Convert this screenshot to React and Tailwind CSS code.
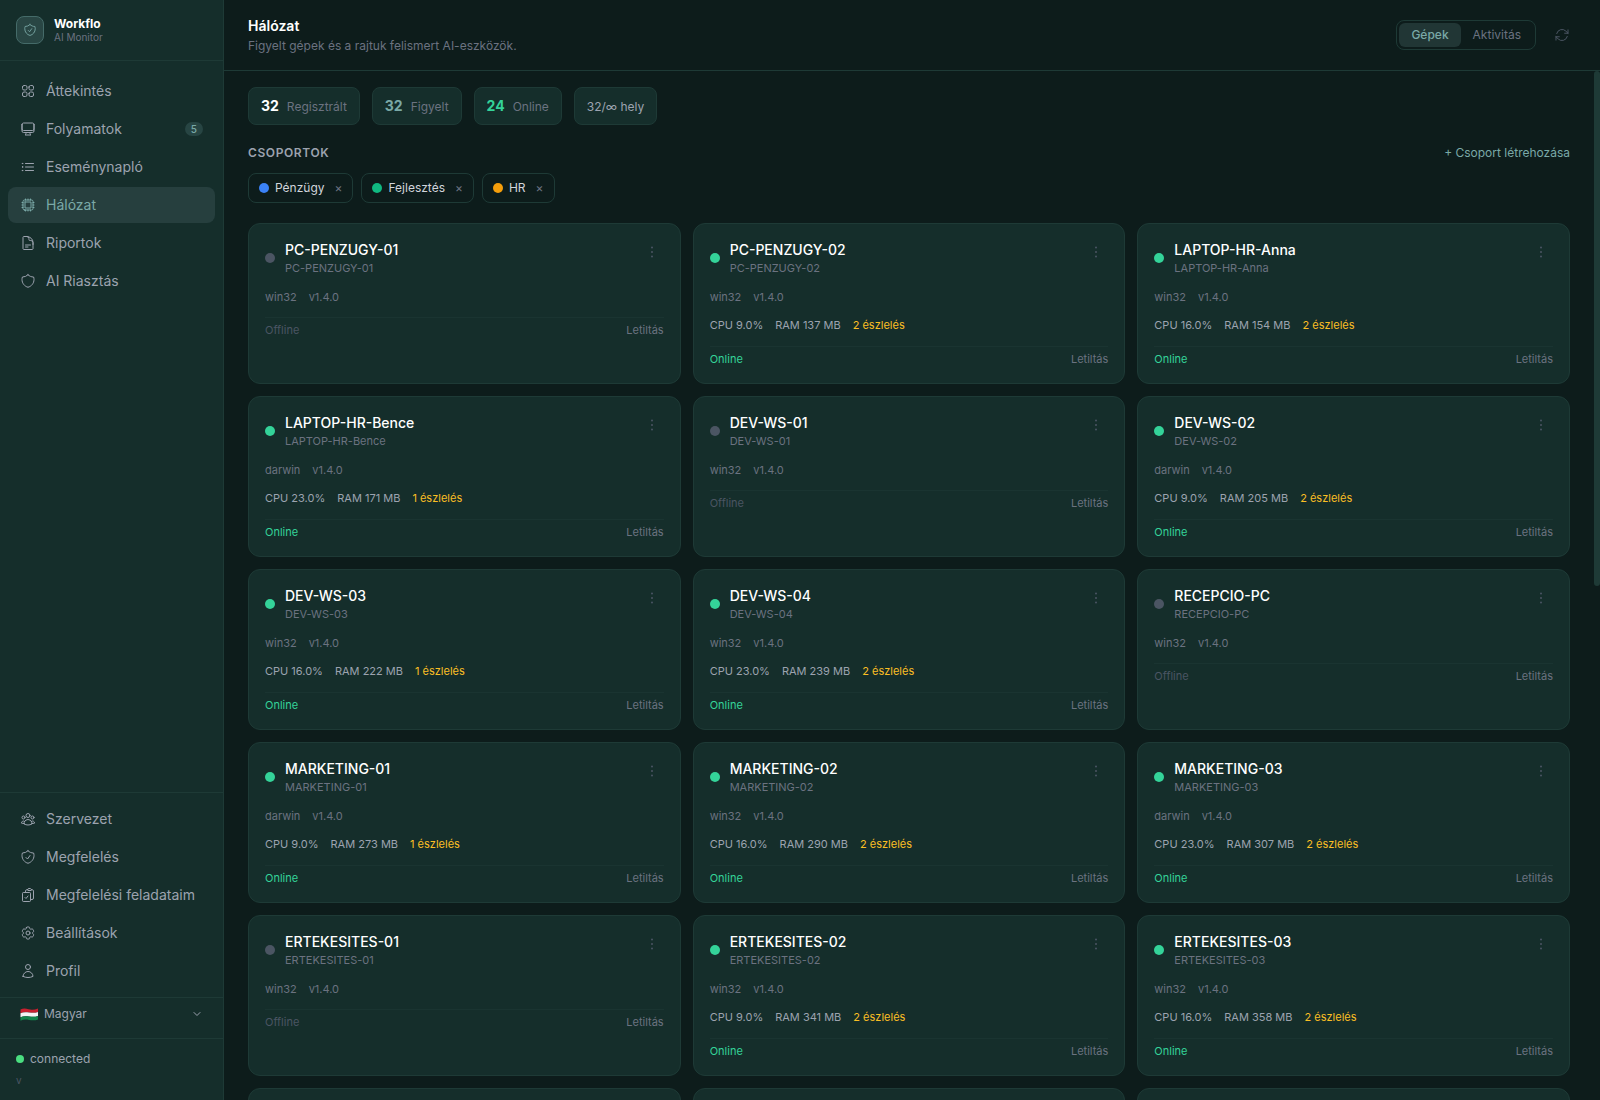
import React, { useState } from "react"
import {
    HiOutlineArrowPath,
    HiOutlineClipboardDocumentCheck,
    HiOutlineCog6Tooth,
    HiOutlineComputerDesktop,
    HiOutlineCpuChip,
    HiOutlineDocumentText,
    HiOutlineListBullet,
    HiOutlineShieldCheck,
    HiOutlineSquares2X2,
    HiOutlineUser,
    HiOutlineUserGroup,
} from "react-icons/hi2"
import { ChevronDown } from "lucide-react"

const ShieldIcon = ({ className }) => (
    <svg viewBox="0 0 24 24" fill="none" stroke="currentColor" strokeWidth="1.5" strokeLinecap="round" strokeLinejoin="round" className={className} aria-hidden="true">
        <path d="M12 2.714A11.959 11.959 0 0 1 3.598 6 11.99 11.99 0 0 0 3 9.749c0 5.592 3.824 10.29 9 11.623 5.176-1.332 9-6.03 9-11.622 0-1.31-.21-2.571-.598-3.751h-.152c-3.196 0-6.1-1.248-8.25-3.285Z" />
    </svg>
)

const FlagHu = () => (
    <svg viewBox="0 0 18 13" className="w-[18px] h-[13px] shrink-0" aria-hidden="true">
        <path d="M.5 1.6C3 .2 5.500 .4 8.500 1.200S15 1.700 18 .4V4C15 5.200 12 4.900 9 4.500S3 4 .5 5.200Z" fill="#c8202f" />
        <path d="M.5 5.200C3 4 6 4.100 9 4.500S15 5.200 18 4V8C15 9.200 12 8.900 9 8.500S3 8 .5 9.200Z" fill="#f3f3f3" />
        <path d="M.5 9.200C3 8 6 8.100 9 8.500S15 9.200 18 8V11.400C15 12.700 12 12.400 9 11.900S3 11.400 .5 12.700Z" fill="#12834a" />
    </svg>
)

const mainNav = [
    { label: "Áttekintés", icon: HiOutlineSquares2X2 },
    { label: "Folyamatok", icon: HiOutlineComputerDesktop, badge: 5 },
    { label: "Eseménynapló", icon: HiOutlineListBullet },
    { label: "Hálózat", icon: HiOutlineCpuChip, active: true },
    { label: "Riportok", icon: HiOutlineDocumentText },
    { label: "AI Riasztás", icon: ShieldIcon },
]

const bottomNav = [
    { label: "Szervezet", icon: HiOutlineUserGroup },
    { label: "Megfelelés", icon: HiOutlineShieldCheck },
    { label: "Megfelelési feladataim", icon: HiOutlineClipboardDocumentCheck },
    { label: "Beállítások", icon: HiOutlineCog6Tooth },
    { label: "Profil", icon: HiOutlineUser },
]

const groups = [
    { name: "Pénzügy", dot: "bg-[#3b82f6]" },
    { name: "Fejlesztés", dot: "bg-[#10b981]" },
    { name: "HR", dot: "bg-[#f59e0b]" },
]

const names = [
    "PC-PENZUGY-01", "PC-PENZUGY-02", "LAPTOP-HR-Anna", "LAPTOP-HR-Bence",
    "DEV-WS-01", "DEV-WS-02", "DEV-WS-03", "DEV-WS-04", "RECEPCIO-PC",
    "MARKETING-01", "MARKETING-02", "MARKETING-03",
    "ERTEKESITES-01", "ERTEKESITES-02", "ERTEKESITES-03",
]

const macs = ["LAPTOP-HR-Bence", "DEV-WS-02", "MARKETING-01", "MARKETING-03"]

const machines = names.map((name, i) => ({
    name,
    platform: macs.includes(name) ? "darwin" : "win32",
    version: "v1.4.0",
    online: i % 4 !== 0,
    cpu: (2 + (i % 4) * 7).toFixed(1),
    ram: 120 + i * 17,
    detections: i % 3 === 0 ? 1 : 2,
}))

const NavItem = ({ label, icon: Icon, badge, active }) => (
    <a
        href="#"
        aria-current={active ? "page" : undefined}
        className={`flex items-center gap-2.5 rounded-lg px-3 py-2 text-sm ${active ? "bg-[#263f3e] text-[#7aa9a7]" : "text-[#9ca3af]"}`}
    >
        <Icon className="size-4 shrink-0" />
        <span className="flex-1">{label}</span>
        {badge && (
            <span className="rounded-full bg-[#274543] px-1.5 text-[10px] leading-[14px] font-medium text-[#7aa9a7]">{badge}</span>
        )}
    </a>
)

const Sidebar = () => (
    <aside className="flex w-56 shrink-0 flex-col border-r border-[#1e3a36] bg-[#152e2b]">
        <div className="flex items-center gap-2.5 border-b border-[#1e3a36] p-4">
            <div className="flex size-7 items-center justify-center rounded-lg border border-[#456b69] bg-[#294644] text-[#7aa9a7]">
                <HiOutlineShieldCheck className="size-3.5" />
            </div>
            <div>
                <p className="text-xs leading-tight font-bold text-white">Workflo</p>
                <p className="text-[10px] leading-tight text-[#6b7280]">AI Monitor</p>
            </div>
        </div>

        <nav className="flex flex-1 flex-col gap-0.5 px-2 py-3">
            {mainNav.map((item) => <NavItem key={item.label} {...item} />)}
        </nav>

        <nav className="flex flex-col gap-0.5 border-t border-[#1e3a36] p-2">
            {bottomNav.map((item) => <NavItem key={item.label} {...item} />)}
        </nav>

        <div className="border-t border-[#1e3a36] px-2 pb-2">
            <div className="flex items-center gap-1.5 px-3 py-2 text-xs text-[#9ca3af]">
                <FlagHu />
                <select aria-label="Nyelv" className="flex-1 appearance-none bg-transparent outline-none">
                    <option>Magyar</option>
                </select>
                <ChevronDown className="size-3" />
            </div>
        </div>

        <div className="border-t border-[#1e3a36] px-4 py-3">
            <div className="flex items-center gap-1.5 text-xs text-[#9ca3af]">
                <span className="size-2 rounded-full bg-[#4ade80]"></span>
                connected
            </div>
            <p className="mt-1.5 text-[10px] text-[#4b5563]">v</p>
        </div>
    </aside>
)

const Stat = ({ value, label, color }) => (
    <div className="rounded-lg border border-[#1e3a36] bg-[#152e2b] px-3 py-2 text-sm">
        <span className={`font-bold ${color}`}>{value}</span>
        <span className="ml-2 text-xs text-[#6b7280]">{label}</span>
    </div>
)

const MachineCard = ({ machine }) => (
    <article className="rounded-xl border border-[#1e3a36] bg-[#152e2b] p-4">
        <div className="flex items-start justify-between">
            <div className="flex items-center gap-2.5">
                <span className={`size-2.5 rounded-full ${machine.online ? "bg-[#34d399]" : "bg-[#4b5563]"}`}></span>
                <div>
                    <h3 className="text-sm font-medium text-white">{machine.name}</h3>
                    <p className="text-[11px] text-[#6b7280]">{machine.name}</p>
                </div>
            </div>
            <button type="button" aria-label="Műveletek" className="p-1 text-[#4b5563]">
                <svg viewBox="0 0 16 16" fill="currentColor" className="size-4">
                    <circle cx="8" cy="3.5" r="1" />
                    <circle cx="8" cy="8" r="1" />
                    <circle cx="8" cy="12.500" r="1" />
                </svg>
            </button>
        </div>

        <div className="mt-3 flex gap-3 text-[11px] text-[#6b7280]">
            <span>{machine.platform}</span>
            <span>{machine.version}</span>
        </div>

        {machine.online && (
            <div className="mt-3 flex gap-3 text-[11px] text-[#9ca3af]">
                <span>CPU {machine.cpu}%</span>
                <span>RAM {machine.ram} MB</span>
                <span className="text-[#fbbf24]">{machine.detections} észlelés</span>
            </div>
        )}

        <div className="mt-3 flex justify-between border-t border-[#1a3431] pt-1 text-[11px]">
            <span className={machine.online ? "text-[#34d399]" : "text-[#4b5563]"}>{machine.online ? "Online" : "Offline"}</span>
            <button type="button" className="text-[#6b7280]">Letiltás</button>
        </div>
    </article>
)

const App = () => {
    const [tab, setTab] = useState("Gépek")

    return (
        <div className="flex h-screen bg-[#0d1c1b] font-['Inter',sans-serif]">
            <Sidebar />

            <main className="flex min-w-0 flex-1 flex-col">
                <header className="flex items-center justify-between border-b border-[#1e3a36] px-6 py-4">
                    <div>
                        <h1 className="text-sm font-semibold text-white">Hálózat</h1>
                        <p className="mt-0.5 text-xs text-[#6b7280]">Figyelt gépek és a rajtuk felismert AI-eszközök.</p>
                    </div>
                    <div className="flex items-center gap-3">
                        <div className="flex rounded-lg border border-[#1e3a36] p-0.5">
                            {["Gépek", "Aktivitás"].map((name) => (
                                <button
                                    key={name}
                                    type="button"
                                    onClick={() => setTab(name)}
                                    className={`rounded-md px-3 py-1 text-xs ${tab === name ? "bg-[#213635] font-medium text-[#7aa9a7]" : "text-[#6b7280]"}`}
                                >
                                    {name}
                                </button>
                            ))}
                        </div>
                        <button type="button" aria-label="Frissítés" className="p-1.5 text-[#4b5563]">
                            <HiOutlineArrowPath className="size-4" />
                        </button>
                    </div>
                </header>

                <div className="flex min-h-0 flex-1">
                    <div className="flex min-w-0 flex-1 flex-col gap-5 overflow-hidden px-6 pt-4">
                        <section className="flex gap-3">
                            <Stat value="32" label="Regisztrált" color="text-white" />
                            <Stat value="32" label="Figyelt" color="text-[#7aa9a7]" />
                            <Stat value="24" label="Online" color="text-[#34d399]" />
                            <div className="rounded-lg border border-[#1e3a36] bg-[#152e2b] px-3 py-2 text-sm">
                                <span className="text-xs text-[#9ca3af]">32/∞ hely</span>
                            </div>
                        </section>

                        <section>
                            <div className="flex items-center justify-between text-xs">
                                <h2 className="font-semibold tracking-wider text-[#9ca3af] uppercase">Csoportok</h2>
                                <button type="button" className="text-[#7aa9a7]">+ Csoport létrehozása</button>
                            </div>
                            <ul className="mt-3 flex gap-2">
                                {groups.map((group) => (
                                    <li key={group.name} className="flex items-center gap-1.5 rounded-lg border border-[#1e3a36] px-2.5 py-1.5 text-xs text-[#d1d5db]">
                                        <span className={`size-2.5 rounded-full ${group.dot}`}></span>
                                        {group.name}
                                        <button type="button" aria-label={`${group.name} törlése`} className="ml-1 text-[#6b7280]">×</button>
                                    </li>
                                ))}
                            </ul>
                        </section>

                        <section className="grid grid-cols-3 gap-3">
                            {machines.map((machine) => <MachineCard key={machine.name} machine={machine} />)}
                            {[1, 2, 3].map((n) => (
                                <div key={n} className="h-40 rounded-xl border border-[#1e3a36] bg-[#152e2b]"></div>
                            ))}
                        </section>
                    </div>

                    {/* scrollbar */}
                    <div className="w-1.5 shrink-0" aria-hidden="true">
                        <div className="h-1/2 rounded-full bg-[#1e3a36]"></div>
                    </div>
                </div>
            </main>
        </div>
    )
}

export default App
